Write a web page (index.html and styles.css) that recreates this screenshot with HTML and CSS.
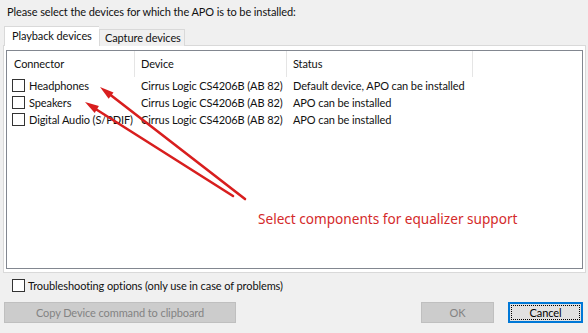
FILE: index.html
```html
<!DOCTYPE html>
<html>
<head>
<meta charset="utf-8">
<link rel="stylesheet" href="styles.css">
</head>
<body>
<div class="dialog">
  <div class="prompt">Please select the devices for which the APO is to be installed:</div>
  <div class="tabs">
    <div class="tab active">Playback devices</div>
    <div class="tab">Capture devices</div>
  </div>
  <div class="panel">
    <div class="list">
      <div class="row head">
        <div class="c1">Connector</div>
        <div class="c2">Device</div>
        <div class="c3">Status</div>
      </div>
      <div class="row">
        <div class="c1"><span class="cb"></span>Headphones</div>
        <div class="c2">Cirrus Logic CS4206B (AB 82)</div>
        <div class="c3">Default device, APO can be installed</div>
      </div>
      <div class="row">
        <div class="c1"><span class="cb"></span>Speakers</div>
        <div class="c2">Cirrus Logic CS4206B (AB 82)</div>
        <div class="c3">APO can be installed</div>
      </div>
      <div class="row">
        <div class="c1"><span class="cb"></span>Digital Audio (S/PDIF)</div>
        <div class="c2">Cirrus Logic CS4206B (AB 82)</div>
        <div class="c3">APO can be installed</div>
      </div>
    </div>
  </div>
  <div class="trouble"><span class="cb"></span>Troubleshooting options (only use in case of problems)</div>
  <div class="buttons">
    <div class="btn disabled copy">Copy Device command to clipboard</div>
    <div class="spacer"></div>
    <div class="btn disabled ok">OK</div>
    <div class="btn focused cancel"><span class="focus">Cancel</span></div>
  </div>
</div>
<svg class="annot" width="588" height="333" viewBox="0 0 588 333">
  <line x1="245" y1="199" x2="108" y2="93" stroke="#d81e1e" stroke-width="2.6" stroke-linecap="round"/>
  <polygon points="100,87 113.5,92.4 108.7,98.8" fill="#d81e1e"/>
  <line x1="233" y1="196" x2="94" y2="108" stroke="#d81e1e" stroke-width="2.6" stroke-linecap="round"/>
  <polygon points="85,102 98.9,106.1 94.7,112.9" fill="#d81e1e"/>
</svg>
<div class="note">Select components for equalizer support</div>
</body>
</html>
```
FILE: styles.css
```css
html, body {
  margin: 0;
  padding: 0;
  background: #f0f0f0;
  width: 588px;
  height: 333px;
  overflow: hidden;
}
body {
  font-family: Lato, "Noto Sans", sans-serif;
  font-size: 11px;
  letter-spacing: -0.1px;
  color: #111;
  position: relative;
}
.dialog {
  padding: 0 2px 0 3px;
}
.prompt {
  height: 26px;
  line-height: 26px;
  padding-left: 4px;
  margin-top: -1px;
  margin-bottom: 1px;
  white-space: nowrap;
}
.tabs {
  display: flex;
  align-items: flex-end;
  height: 20px;
  padding-left: 1px;
}
.tab {
  box-sizing: border-box;
  height: 17px;
  line-height: 15px;
  border: 1px solid #d9d9d9;
  border-bottom: none;
  background: #f0f0f0;
  padding: 0 5px 0 5px;
  width: 86px;
  white-space: nowrap;
}
.tab.active {
  height: 20px;
  line-height: 18px;
  width: 95px;
  padding-left: 7px;
  background: #fff;
  border-right: none;
  position: relative;
  z-index: 1;
}
.panel {
  box-sizing: border-box;
  height: 228px;
  margin-top: -1px;
  border: 1px solid #d9d9d9;
  background: #fff;
  padding: 4px 2px 3px 2px;
}
.list {
  box-sizing: border-box;
  height: 219px;
  border: 1px solid #828790;
  background: #fff;
}
.row {
  display: flex;
  height: 17px;
  line-height: 17px;
  white-space: nowrap;
}
.row.head {
  height: 26px;
  line-height: 25px;
}
.c1 { width: 128px; padding-left: 5px; box-sizing: border-box; display: flex; align-items: center; }
.c2 { width: 152px; padding-left: 6px; box-sizing: border-box; }
.c3 { width: 186px; padding-left: 6px; box-sizing: border-box; }
.head .c1 { padding-left: 7px; display: block; }
.head .c1, .head .c2, .head .c3 {
  border-right: 1px solid #e5e5e5;
}
.cb {
  display: inline-block;
  box-sizing: border-box;
  width: 13px;
  height: 13px;
  border: 1px solid #333;
  background: #fff;
  margin-right: 4px;
  flex: none;
}
.trouble {
  display: flex;
  align-items: center;
  height: 19px;
  margin-top: 3px;
  padding-left: 9px;
}
.trouble .cb { margin-right: 3px; }
.buttons {
  display: flex;
  margin-top: 7px;
  padding-left: 1px;
}
.spacer { flex: 1; }
.btn {
  box-sizing: border-box;
  height: 21px;
  line-height: 19px;
  text-align: center;
  border: 1px solid #bfbfbf;
  background: #cccccc;
  color: #838383;
  white-space: nowrap;
}
.copy { width: 232px; }
.ok { width: 73px; margin-right: 14px; }
.cancel {
  width: 75px;
  margin-right: 3px;
  background: #e1e1e1;
  border: 2px solid #0078d7;
  color: #000;
  padding: 1px;
  line-height: 15px;
}
.focus {
  display: block;
  height: 15px;
  outline: 1px dotted #000;
  outline-offset: -1px;
}
.annot {
  position: absolute;
  left: 0;
  top: 0;
  pointer-events: none;
}
.note {
  position: absolute;
  left: 258px;
  top: 209px;
  color: #d42a2a;
  font-family: "Noto Sans", sans-serif;
  font-size: 13.6px;
  letter-spacing: 0;
  line-height: 20px;
  white-space: nowrap;
}
```
